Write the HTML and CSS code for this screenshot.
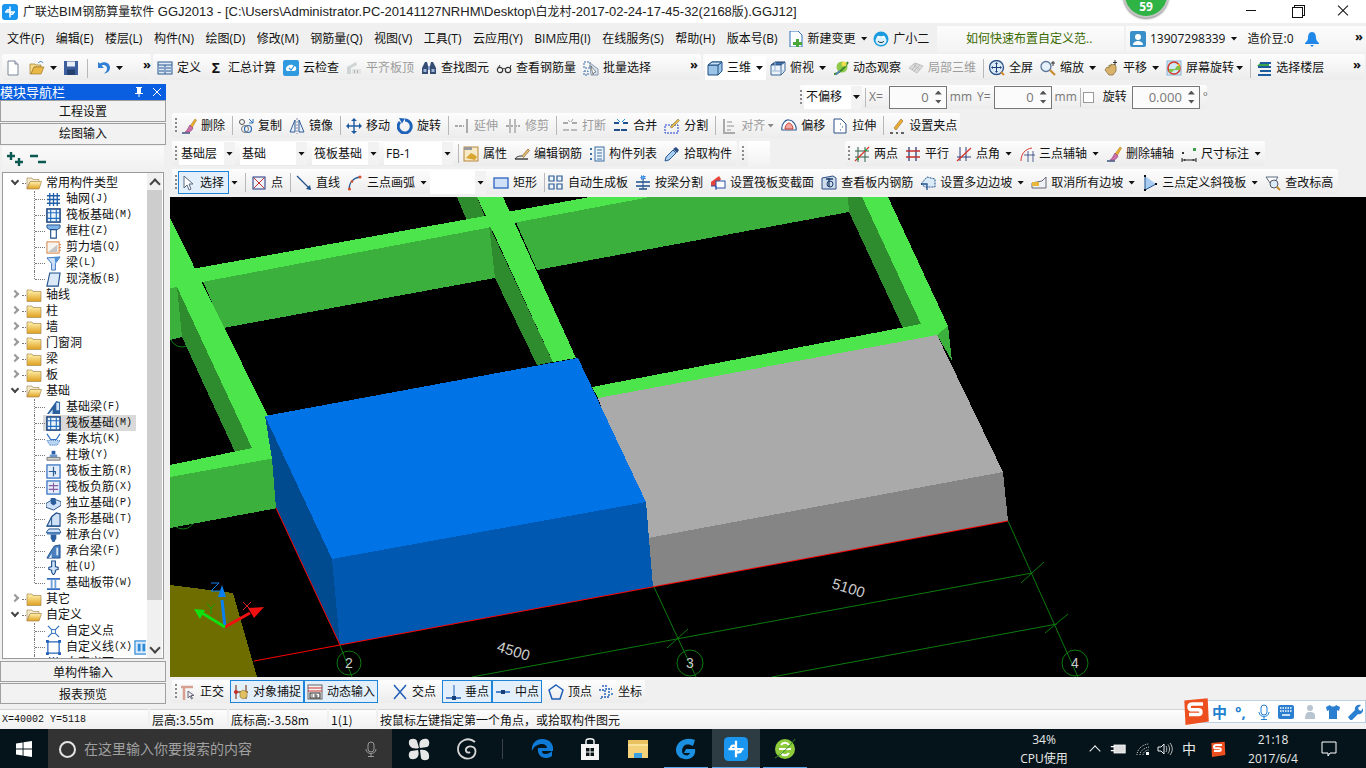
FILE: index.html
```html
<!DOCTYPE html>
<html lang="zh-CN">
<head>
<meta charset="utf-8">
<title>广联达BIM钢筋算量软件 GGJ2013</title>
<link rel="stylesheet" href="styles.css">
</head>
<body>
<svg class="defs" xmlns="http://www.w3.org/2000/svg">
<defs>
<linearGradient id="fy" x1="0" y1="0" x2="0" y2="1"><stop offset="0" stop-color="#fff2b0"/><stop offset="1" stop-color="#e0a020"/></linearGradient>
<symbol id="fclosed" viewBox="0 0 16 16"><path d="M1 3h5l1 1.500h8v10H1z" fill="url(#fy)" stroke="#a88a50" stroke-width=".7"/></symbol>
<symbol id="fopen" viewBox="0 0 16 16"><path d="M1 3h5l1 1.500h6v2.500H4L1 14z" fill="#f5ecd0" stroke="#a88a50" stroke-width=".7"/><path d="M1 14l3-7.500h11.500L13 14z" fill="url(#fy)" stroke="#a88a50" stroke-width=".7"/></symbol>
<symbol id="new" viewBox="0 0 16 16"><path d="M3 1h7l3 3v11H3z" fill="#fff" stroke="#7b8798"/><path d="M10 1v3h3" fill="#dde" stroke="#7b8798"/></symbol>
<symbol id="open" viewBox="0 0 16 16"><path d="M1 4h5l1 1h5v2H5l-3 7H1z" fill="#f3d98a" stroke="#a07a2a" stroke-width=".7"/><path d="M2 14l3-7h10l-3 7z" fill="#e9b846" stroke="#a07a2a" stroke-width=".7"/><path d="M9 3c2-2 4-2 5 0" fill="none" stroke="#3a7bc8"/></symbol>
<symbol id="save" viewBox="0 0 16 16"><rect x="1" y="1" width="14" height="14" fill="#3d5f9e"/><rect x="4" y="1.500" width="8" height="5" fill="#e8eef8"/><rect x="4" y="9.500" width="8" height="5.500" fill="#24406f"/></symbol>
<symbol id="undo" viewBox="0 0 16 16"><path d="M3 2v6h6L6.500 5.500C9 4 12 5.500 12 8.500c0 2-1 3.500-3 5 4-.5 6-3 6-6C15 3 9.500 .5 5 3.500z" fill="#2f7fd6"/></symbol>
<symbol id="def" viewBox="0 0 16 16"><rect x="1" y="2" width="14" height="12" fill="#dfe9f6" stroke="#2b5a94"/><path d="M1 5h14M2 8h5M2 11h5M9 8h5M9 11h5M8 5v9" stroke="#2b5a94"/></symbol>
<symbol id="cloud" viewBox="0 0 16 16"><rect x="0" y="0" width="16" height="16" rx="2" fill="#2f9ae0"/><path d="M3 10c-1-4 5-7 8-4 3 0 3 5 0 5H4z" fill="#fff"/><path d="M6 8l2 2 3-4" stroke="#2f9ae0" fill="none" stroke-width="1.200"/></symbol>
<symbol id="flush" viewBox="0 0 16 16"><path d="M1 7l9-5 1 3-6 3v6H1z" fill="#cfd4d4"/><path d="M6 9h9v5H6z" fill="#e2e4e4"/><path d="M8 10h1v3H8zM11 10h1v3h-1z" fill="#b0b4b4"/></symbol>
<symbol id="find" viewBox="0 0 16 16"><path d="M2 6l2-4h2l1 4v8H1V8zM14 6l-2-4h-2L9 6v8h6V8z" fill="#344b73"/><path d="M7 6h2v4H7z" fill="#8aa2c9"/><path d="M2.500 9h3v3h-3zM10.500 9h3v3h-3z" fill="#9db5d9"/></symbol>
<symbol id="glass" viewBox="0 0 16 16"><circle cx="4" cy="10" r="2.700" fill="none" stroke="#333" stroke-width="1.200"/><circle cx="12" cy="10" r="2.700" fill="none" stroke="#333" stroke-width="1.200"/><path d="M6.500 9c1-.7 2-.7 3 0M2 8l2-3M14 8l1-3" stroke="#333" fill="none"/></symbol>
<symbol id="batch" viewBox="0 0 16 16"><path d="M1 2h6v6H1zM1 11h4v4H1z" fill="none" stroke="#3a6ea5" stroke-dasharray="2 1"/><path d="M7 3l8 6v6H8z" fill="#dbe4ef" stroke="#8899aa"/><path d="M8 6l5 6-2 .500-1 2z" fill="#fff" stroke="#444" stroke-width=".6"/></symbol>
<symbol id="cube" viewBox="0 0 16 16"><path d="M1 5l4-3h10v9l-4 4H1z" fill="#9cc4e8" stroke="#1f4f80"/><path d="M1 5h10v10M11 5l4-3" fill="none" stroke="#1f4f80"/><path d="M1 5l4-3h10l-4 3z" fill="#c8e0f5" stroke="#1f4f80"/></symbol>
<symbol id="cube2" viewBox="0 0 16 16"><path d="M1 5l4-3h10l-4 3z" fill="#3d6fa8" stroke="#1f3f70"/><path d="M1 5h10v10H1zM11 5l4-3v9l-4 4" fill="#eaf3fb" stroke="#3c6796"/><path d="M5 2v9H1M5 11h10" stroke="#9db7d0" fill="none"/></symbol>
<symbol id="orbit" viewBox="0 0 16 16"><circle cx="9" cy="7" r="5.500" fill="#8fc94a"/><path d="M1 14c4 0 11-6 14-12" stroke="#3a8a2a" stroke-width="2" fill="none"/><circle cx="11" cy="4" r="2.500" fill="#f0dd50"/><path d="M3 15c1-2 2-3 4-4" stroke="#5a7fc0" stroke-width="1.500" fill="none"/></symbol>
<symbol id="local" viewBox="0 0 16 16"><path d="M1 8l6-5 8 3-6 7z" fill="#dcdcdc" stroke="#c0c0c0"/><path d="M5 4l7 6M9 3l-5 7M12 5l-6 6" stroke="#bbb" fill="none"/></symbol>
<symbol id="full" viewBox="0 0 16 16"><circle cx="7.500" cy="7.500" r="7" fill="#dcebf8" stroke="#2c4f86" stroke-width="1.300"/><path d="M7.500 3v9M3 7.500h9" stroke="#1e3f75"/><path d="M7.500 2l1.500 2H6zM7.500 13L6 11h3zM2 7.500L4 6v3zM13 7.500L11 9V6z" fill="#1e3f75"/><path d="M12 12l3 3" stroke="#d08a2a" stroke-width="2"/></symbol>
<symbol id="zoom" viewBox="0 0 16 16"><circle cx="6" cy="6.500" r="5" fill="#e6f0fa" stroke="#5b7797" stroke-width="1.300"/><path d="M10 10l5 5" stroke="#c98c2c" stroke-width="2.200"/><path d="M13 1v5M11 3h4" stroke="#333"/></symbol>
<symbol id="pan" viewBox="0 0 16 16"><path d="M2 10l2-3 2 1V5l2 1V4l2 1 1-1 2 2v5l-3 4H6z" fill="#d9b36c" stroke="#7e6531" stroke-width=".7"/><path d="M12 0v5M10 2.500h4" stroke="#333"/></symbol>
<symbol id="rot3" viewBox="0 0 16 16"><rect x="1" y="1" width="14" height="14" fill="#cfe8f7" stroke="#88b5d6"/><circle cx="8" cy="8" r="6" fill="none" stroke="#d23a2a" stroke-width="1.600"/><path d="M3 9h6l2-3h3v4H8l-2 2H3z" fill="#7fc24a"/><path d="M11 4l3 0-1 3" fill="#f0b428"/></symbol>
<symbol id="floors" viewBox="0 0 16 16"><path d="M4 3h11M2 7h13M4 11h11M2 15h13" stroke="#1c5c9c" stroke-width="2"/><path d="M4 3L1 6h3zM2 7l3-3" fill="#3aa24a"/><path d="M4 5h9" stroke="#3aa24a" stroke-width="2"/></symbol>
<symbol id="del" viewBox="0 0 16 16"><path d="M1 15h8" stroke="#1d3f70" stroke-width="1.300"/><path d="M9 8l5-7 1.500 1L11 10z" fill="#f0b030" stroke="#9b6a14" stroke-width=".5"/><path d="M9 7l3 3c-1 3-4 5-8 4 2-1 3-4 5-7z" fill="#cc6fa8" stroke="#7b2e66" stroke-width=".5"/></symbol>
<symbol id="copy" viewBox="0 0 16 16"><circle cx="4" cy="4" r="2.500" fill="none" stroke="#555"/><circle cx="10" cy="11" r="3.500" fill="none" stroke="#2c6cb8" stroke-width="1.200"/><circle cx="7" cy="11" r="3.500" fill="none" stroke="#777"/><path d="M11 1l4 4M15 1v4h-4" stroke="#2c6cb8" fill="none"/></symbol>
<symbol id="mirror" viewBox="0 0 16 16"><path d="M1 14L6 2v12zM15 14L10 2v12z" fill="#e8f1fa" stroke="#2f5c94"/><path d="M8 0v16" stroke="#88a" stroke-dasharray="2 1"/></symbol>
<symbol id="move" viewBox="0 0 16 16"><path d="M8 1v14M1 8h14" stroke="#1f5aa0" stroke-width="1.400"/><path d="M8 0l3 3H5zM8 16l-3-3h6zM0 8l3-3v6zM16 8l-3 3V5z" fill="#1f5aa0"/></symbol>
<symbol id="rot" viewBox="0 0 16 16"><path d="M3 4a6.500 6.500 0 1 0 5-2" fill="none" stroke="#1f63b8" stroke-width="3"/><path d="M2 0l6 .500-3 5z" fill="#1f63b8"/></symbol>
<symbol id="ext" viewBox="0 0 16 16"><path d="M1 8h9" stroke="#aaa" stroke-dasharray="3 1" stroke-width="2"/><path d="M13 1v14" stroke="#aaa" stroke-width="2"/></symbol>
<symbol id="trim" viewBox="0 0 16 16"><path d="M1 8h14" stroke="#aaa" stroke-dasharray="3 1" stroke-width="2"/><path d="M5 1v14M10 1v14" stroke="#bbb" stroke-width="2"/></symbol>
<symbol id="brk" viewBox="0 0 16 16"><path d="M1 5h5M10 5h5" stroke="#aaa" stroke-width="2"/><path d="M1 12h14" stroke="#bbb" stroke-width="2" stroke-dasharray="6 2"/><path d="M6 2l2 2M11 1l-2 3" stroke="#aaa"/></symbol>
<symbol id="merge" viewBox="0 0 16 16"><path d="M1 12h14" stroke="#1f4f8c" stroke-width="2" stroke-dasharray="6 1"/><path d="M1 5h5M10 5h5" stroke="#1f4f8c" stroke-width="2"/><path d="M4 1l3 3M12 1L9 4" stroke="#1f8cd8"/></symbol>
<symbol id="split" viewBox="0 0 16 16"><rect x="1" y="7" width="13" height="8" fill="none" stroke="#1a3fd0" stroke-dasharray="2 1"/><path d="M6 9l8-8 1.500 1.500L8 10z" fill="#e9b84a" stroke="#664"  stroke-width=".5"/></symbol>
<symbol id="align" viewBox="0 0 16 16"><path d="M3 1v14h11" stroke="#aaa" stroke-width="2" fill="none"/><path d="M6 4h5M6 8h7M6 12h4" stroke="#c4c4c4" stroke-width="2"/></symbol>
<symbol id="offset" viewBox="0 0 16 16"><path d="M1 12c-1-5 3-11 7-10 4 0 8 6 7 10z" fill="#fff" stroke="#2c5c94" stroke-width="1.200"/><path d="M4 11c0-3 2-6 4-6s4 3 4 6z" fill="#f1a7a0" stroke="#c83c34"/></symbol>
<symbol id="stretch" viewBox="0 0 16 16"><path d="M2 1h7l5 5v9H2z" fill="#fff" stroke="#2c4f86"/><path d="M8 6h1M10 9h1M8 12h1" stroke="#2c4f86"/></symbol>
<symbol id="gripset" viewBox="0 0 16 16"><path d="M1 15h3M7 15h2M12 15h3" stroke="#333" stroke-width="1.500"/><path d="M5 10l7-9 2 2-7 9z" fill="#f0b030" stroke="#7b4a14" stroke-width=".5"/></symbol>
<symbol id="prop" viewBox="0 0 16 16"><rect x="1" y="1" width="14" height="14" fill="#f7e8c6" stroke="#b8893a"/><path d="M1 1h8v3H1z" fill="#999"/><path d="M3 12l5-5 4 2 2 2-2 3z" fill="#d8a530"/></symbol>
<symbol id="rebar" viewBox="0 0 16 16"><path d="M1 13h13" stroke="#222" stroke-width="1.300"/><path d="M1 13c2-3 5-3 7-3" stroke="#222" fill="none"/><path d="M8 10l6-7 1.500 1.500-6 7z" fill="#e9c27a" stroke="#704a14" stroke-width=".6"/></symbol>
<symbol id="list" viewBox="0 0 16 16"><path d="M1 2h2v2H1zM1 7h2v2H1zM1 12h2v2H1z" fill="#3a6ea5"/><rect x="6" y="1" width="9" height="14" fill="#eef4fa" stroke="#3a6ea5"/><path d="M8 4h5M8 7h5M8 10h5M8 13h5" stroke="#3a6ea5"/></symbol>
<symbol id="pick" viewBox="0 0 16 16"><path d="M1 15l1-4 7-7 3 3-7 7z" fill="#a8cdf0" stroke="#2c5c94"/><path d="M9 3l3-2 3 3-2 3z" fill="#2c4f86"/></symbol>
<symbol id="two" viewBox="0 0 16 16"><path d="M4 1v15M11 1v15M1 5h14M1 11h14" stroke="#2c5f45"/><path d="M1 15L15 1" stroke="#d8342a" stroke-width="1.300"/><path d="M3 12h2v2H3zM11 3h2v2h-2z" fill="#2aa84a"/></symbol>
<symbol id="par" viewBox="0 0 16 16"><path d="M4 1v14M11 1v14" stroke="#2c3f7a" stroke-width="1.300"/><path d="M1 5h14M1 11h14" stroke="#c83030" stroke-width="1.300"/></symbol>
<symbol id="ang" viewBox="0 0 16 16"><path d="M4 1v14M10 1v14M1 11h14" stroke="#2c3f7a"/><path d="M1 15L15 2" stroke="#d8342a" stroke-width="1.300"/></symbol>
<symbol id="arc3" viewBox="0 0 16 16"><path d="M2 15C2 8 6 3 13 2" fill="none" stroke="#d8342a"/><path d="M9 5v11M14 5v11M5 9h11" stroke="#2c3f7a" stroke-width=".8"/></symbol>
<symbol id="dim" viewBox="0 0 16 16"><path d="M1 12v4M15 12v4M1 14h14" stroke="#222"/><path d="M1 6h2v2H1z" fill="#333"/><path d="M12 2h3v3h-3z" fill="#3aa24a"/><path d="M5 14l-2-1v2zM11 14l2-1v2z" fill="#222"/></symbol>
<symbol id="cur" viewBox="0 0 16 16"><path d="M4 1v12l3-3 2 5 2-1-2-5h4z" fill="#fff" stroke="#5a6a80"/></symbol>
<symbol id="pt" viewBox="0 0 16 16"><rect x="2" y="2" width="12" height="12" fill="#eef2fb" stroke="#20307a"/><path d="M3 3l10 10M13 3L3 13" stroke="#c83030"/></symbol>
<symbol id="line" viewBox="0 0 16 16"><path d="M1 1l13 13" stroke="#1f4f8c" stroke-width="1.300"/><path d="M15 15l-5-1 4-4z" fill="#1f4f8c"/></symbol>
<symbol id="arc" viewBox="0 0 16 16"><path d="M2 15C2 8 6 3 13 2" fill="none" stroke="#2c5c94" stroke-width="1.300"/><circle cx="2.500" cy="14" r="1.500" fill="#d8502a"/><circle cx="5" cy="6.500" r="1.300" fill="#d8502a"/><circle cx="13" cy="2" r="1.500" fill="#d8502a"/></symbol>
<symbol id="rect" viewBox="0 0 16 16"><rect x="1" y="3" width="14" height="10" fill="#cfe0f7" stroke="#2d62c0" stroke-width="1.300"/></symbol>
<symbol id="auto" viewBox="0 0 16 16"><path d="M1 1h5v5H1zM9 1h5v5H9zM1 9h5v5H1zM9 9h5v5H9z" fill="#eef4fb" stroke="#2b5a94" stroke-width="1.200"/></symbol>
<symbol id="bsplit" viewBox="0 0 16 16"><path d="M6 1h4v3H6z" fill="#5ab0e8" stroke="#1a5ad0" stroke-dasharray="1 1"/><path d="M1 7h14M1 11h14M4 14h8" stroke="#1f4f8c" stroke-width="1.500"/><path d="M8 4v10" stroke="#1f4f8c"/></symbol>
<symbol id="var" viewBox="0 0 16 16"><path d="M1 7l8-6 2 3-5 7H1z" fill="#e8443a"/><rect x="6" y="6" width="9" height="7" fill="#fff" stroke="#2c4fa8"/><path d="M1 11h5v4" fill="none" stroke="#2c4fa8"/></symbol>
<symbol id="view" viewBox="0 0 16 16"><path d="M1 3l11-2 3 2v11H1z" fill="#cfdceb" stroke="#2c4f86"/><path d="M5 4h7M8 3v9" stroke="#1c3c6c" stroke-width="1.300"/><circle cx="9" cy="9" r="3" fill="none" stroke="#1c3c6c"/></symbol>
<symbol id="poly" viewBox="0 0 16 16"><path d="M1 9l6-7 8 2v8H5z" fill="#dcebf8" stroke="#1f4f8c" stroke-dasharray="2 1"/><path d="M1 9h6v6" fill="none" stroke="#1f4f8c" stroke-width="1.300"/></symbol>
<symbol id="cancel" viewBox="0 0 16 16"><path d="M1 8l10-2 4-4v11H1z" fill="#eef2f7" stroke="#667"/><path d="M1 7h7v4H1z" fill="#e8b838"/></symbol>
<symbol id="tri" viewBox="0 0 16 16"><path d="M3 1v14l11-6z" fill="#a8cdf0"/><path d="M3 1v14l11-6" fill="none" stroke="#1f4f8c"/><path d="M2 0h2v2H2zM2 14h2v2H2zM13 8h2v2h-2z" fill="#111"/></symbol>
<symbol id="elev" viewBox="0 0 16 16"><path d="M1 2h12L9 8H5z" fill="#fff" stroke="#5b6b80"/><circle cx="9" cy="9" r="4" fill="#dcebf8" stroke="#556"/><path d="M12 12l3 3" stroke="#c98c2c" stroke-width="2"/></symbol>
<symbol id="tgrid" viewBox="0 0 16 16"><path d="M4 1v14M8 1v14M12 1v14M1 4h14M1 8h14M1 12h14" stroke="#1f5fa8" stroke-width="1.400"/></symbol>
<symbol id="traft" viewBox="0 0 16 16"><rect x="1" y="1" width="14" height="14" fill="#eaf2fb" stroke="#173f7a" stroke-width="1.600"/><path d="M5 1v14M11 1v14M1 5h14M1 11h14" stroke="#1f6fc0" stroke-width="1.200"/></symbol>
<symbol id="tcol" viewBox="0 0 16 16"><path d="M1 1h14v3l-3 2H4L1 4z" fill="#7fb4e8" stroke="#1f4f8c"/><path d="M5 6h6v9H5z" fill="#fff" stroke="#1f4f8c" stroke-width="1.200"/></symbol>
<symbol id="twall" viewBox="0 0 16 16"><rect x="1" y="2" width="13" height="12" fill="#f7f3ee" stroke="#d87c3a"/><path d="M2 13l10-8v8z" fill="#c4c4c4"/><path d="M14 5h2M14 8h2M14 11h2" stroke="#d87c3a"/></symbol>
<symbol id="tbeam" viewBox="0 0 16 16"><path d="M1 2l14-1-5 7v7H6V8z" fill="#cfe2f7" stroke="#2f6ec0"/><path d="M9 1l5 0-4 7z" fill="#4a90d8"/></symbol>
<symbol id="tslab" viewBox="0 0 16 16"><path d="M4 1h11l-2 14H1z" fill="#dbe9f8" stroke="#1f4f8c" stroke-width="1.200"/></symbol>
<symbol id="tsb" viewBox="0 0 16 16"><path d="M1 15l5-7 5-7 4 1v13H1z" fill="#2c5f9e"/><path d="M3 15l4-5v5zM11 3h3v8h-3z" fill="#cfe2f7"/></symbol>
<symbol id="tpit" viewBox="0 0 16 16"><path d="M1 2l4 6h6l4-6" fill="none" stroke="#2f6ec0" stroke-width="1.300"/><path d="M1 9l3 5h8l3-5z" fill="#b8d4f0" stroke="#2f6ec0" stroke-dasharray="1 1"/></symbol>
<symbol id="tcap" viewBox="0 0 16 16"><path d="M6 3h4v4H6z" fill="#2c5fa8"/><path d="M4 7h8v3H4z" fill="#6a98d0"/><path d="M1 10h14v3H1z" fill="#d0d0d0" stroke="#777"/></symbol>
<symbol id="trm" viewBox="0 0 16 16"><rect x="1" y="1" width="14" height="14" fill="#e3eefa" stroke="#2f6ec0" stroke-width="1.300"/><path d="M8 3v10M3 8h7v3" fill="none" stroke="#2f5c94" stroke-width="1.300"/></symbol>
<symbol id="trn" viewBox="0 0 16 16"><rect x="1" y="1" width="14" height="14" fill="#e3eefa" stroke="#2f6ec0" stroke-width="1.300"/><path d="M8 3v10M3 6h10M3 10h10" stroke="#8a5aa0" stroke-width="1.100"/></symbol>
<symbol id="tiso" viewBox="0 0 16 16"><path d="M0 8l8-5 8 3v4l-8 5-8-3z" fill="#cfe2f7" stroke="#1f4f8c"/><path d="M5 2h5l1 6-3 2-3-2z" fill="#2c5f9e"/></symbol>
<symbol id="tstrip" viewBox="0 0 16 16"><path d="M1 15l3-6 2-4 5-4 4 1v13H1z" fill="#cfe2f7" stroke="#1f4f8c" stroke-width="1.200"/><path d="M1 15h14M6 5v10" stroke="#1f4f8c"/></symbol>
<symbol id="tpc" viewBox="0 0 16 16"><path d="M3 1h11l2 4H0z" fill="#cfe2f7" stroke="#1f4f8c"/><path d="M1 5h14v2H1z" fill="#4a80c0"/><path d="M5 7h6v4l-2 4H7l-2-4z" fill="#2c5f9e"/></symbol>
<symbol id="tcb" viewBox="0 0 16 16"><path d="M1 15l4-7 4-6 6-1v14z" fill="#4a80c0" stroke="#1f4f8c"/><path d="M3 15l3-5v5z M11 4h2v8h-2z" fill="#dbe9f8"/></symbol>
<symbol id="tpile" viewBox="0 0 16 16"><path d="M6 1h4v6l3 1v2l-3 1v2l-2 3-2-3v-2l-3-1V8l3-1z" fill="#cfe2f7" stroke="#1f4f8c" stroke-width="1.200"/></symbol>
<symbol id="tband" viewBox="0 0 16 16"><path d="M1 2h14v2H1zM1 13h14v2H1z" fill="#2f6ec0"/><path d="M5 4h2v9H5zM9 4h2v9H9z" fill="#6fa0d8"/></symbol>
<symbol id="tcpt" viewBox="0 0 16 16"><path d="M2 2l12 12M14 2L2 14" stroke="#2f6ec0" stroke-width="1.300"/><rect x="6" y="6" width="4" height="4" fill="#fff" stroke="#2f6ec0"/></symbol>
<symbol id="tcln" viewBox="0 0 16 16"><rect x="2" y="2" width="12" height="12" fill="none" stroke="#1f5fb8" stroke-width="1.300"/><path d="M0 0h3v3H0zM13 0h3v3h-3zM0 13h3v3H0zM13 13h3v3h-3z" fill="#1f5fb8"/></symbol>
<symbol id="tls" viewBox="0 0 16 16"><rect x="1" y="1" width="14" height="14" fill="#d9ebfb" stroke="#2f8ad8" stroke-width="1.300"/><path d="M4 4h3v8H4zM9 4h3v8H9z" fill="#2f8ad8"/></symbol>
<symbol id="ortho" viewBox="0 0 16 16"><path d="M1 3h12M4 3v13" stroke="#d8a090" stroke-width="2.500"/><path d="M8 7v7l2-2 1.500 3 1-.5-1.500-3h3z" fill="#eee" stroke="#667"/></symbol>
<symbol id="osnap" viewBox="0 0 16 16"><path d="M3 1v14M13 1v14M1 8h14" stroke="#8a5030" stroke-width="1.300"/><circle cx="3" cy="8" r="2" fill="#c83030"/><path d="M7 8l3-2 4 2v5l-4 2-3-2z" fill="#e0c060" stroke="#8a7030" stroke-width=".6"/></symbol>
<symbol id="dyn" viewBox="0 0 16 16"><rect x="1" y="1" width="14" height="14" fill="#f4f4f4" stroke="#666"/><path d="M1 4h14M1 7h14" stroke="#c83030"/><rect x="3" y="9" width="10" height="5" fill="#fff" stroke="#222"/><path d="M5 10v3M8 10v3h2v-2H8" stroke="#222" stroke-width=".7" fill="none"/></symbol>
<symbol id="cross" viewBox="0 0 16 16"><path d="M2 1l12 14M14 1L2 15" stroke="#1f5fb8" stroke-width="1.500"/></symbol>
<symbol id="perp" viewBox="0 0 16 16"><path d="M1 14h15" stroke="#1f5fb8" stroke-width="1.500"/><path d="M9 1v13" stroke="#1f5fb8"/><rect x="7" y="12" width="4" height="4" fill="#173f7a"/></symbol>
<symbol id="midp" viewBox="0 0 16 16"><path d="M1 8h14" stroke="#1f5fb8" stroke-width="1.500"/><rect x="6" y="6" width="4" height="4" fill="#173f7a"/></symbol>
<symbol id="vert" viewBox="0 0 16 16"><path d="M8 1l7 5-3 9H4L1 6z" fill="none" stroke="#1f5fb8" stroke-width="1.500"/></symbol>
<symbol id="coord" viewBox="0 0 16 16"><path d="M5 1v3M1 6h6v5M8 1v4h6M11 7v6H3v2M14 9v3" fill="none" stroke="#1f5fb8" stroke-dasharray="2 1" stroke-width="1.400"/></symbol>
<symbol id="app" viewBox="0 0 16 16"><rect width="16" height="16" rx="3" fill="#1a96f0"/><path d="M8 2.500v11M3 8h10M4.500 8c0-3 3.500-3 3.500 0M8 8c0 3 3.500 3 3.500 0" fill="none" stroke="#fff" stroke-width="1.500"/></symbol>
<symbol id="win" viewBox="0 0 16 16"><path d="M0 2.400l6.600-1v6.200H0zM7.500 1.300L16 0v7.600H7.500zM0 8.400h6.600v6.200l-6.600-1zM7.500 8.400H16V16l-8.500-1.300z" fill="#fff"/></symbol>
<symbol id="mic" viewBox="0 0 16 16"><rect x="5" y="1" width="6" height="10" rx="3" fill="none" stroke="currentColor"/><path d="M3 8c0 6 10 6 10 0M8 13v2M5 15.500h6" fill="none" stroke="currentColor"/></symbol>
<symbol id="wheel" viewBox="0 0 24 24"><path d="M12 11C5 13 1 9 2 4c1-3 7-3 8 0zM13 11C11 5 14 1 20 2c3 1 3 7 0 8zM13 13c6-1 10 2 9 8-1 3-7 3-8 0zM11 13c2 6-1 10-7 9-3-1-3-7 0-8z" fill="#e6e6e6"/></symbol>
<symbol id="swirl" viewBox="0 0 24 24"><path d="M20 5C13-1 3 4 3 12c0 7 7 11 13 9 5-2 6-9 2-11-4-2-8 1-7 4 1 2 3 2 4 1" fill="none" stroke="#d6d6d6" stroke-width="1.800"/></symbol>
<symbol id="edge" viewBox="0 0 24 24"><path d="M12 2C5 2 1 8 2 14c2-5 6-7 10-7 3 0 5 2 5 4H8c-1 6 3 10 8 10 2 0 4-.500 6-2v-5c-2 2-4 3-7 3-2 0-3-1-3-3h11c1-7-3-12-11-12z" fill="#0e7ad6"/></symbol>
<symbol id="store" viewBox="0 0 24 24"><path d="M3 7h18v16H3z" fill="#f4f4f4"/><path d="M8 8V4c0-3 8-3 8 0v4" fill="none" stroke="#f4f4f4" stroke-width="1.500"/><path d="M8 11h3.500v3.500H8zM12.500 11H16v3.500h-3.500zM8 15.500h3.500V19H8zM12.500 15.500H16V19h-3.500z" fill="#0a1418"/></symbol>
<symbol id="fold" viewBox="0 0 24 24"><path d="M2 3h20v18H2z" fill="#f3d27a"/><path d="M2 3h20v4H2z" fill="#e9c160"/><path d="M8 21v-5h8v5" fill="#3aa0e0"/><path d="M2 8h20" stroke="#fff2c0"/></symbol>
<symbol id="g" viewBox="0 0 24 24"><path d="M21 3C11-1 2 5 2 13c0 7 7 10 12 9 5-1 8-5 7-10h-9l-2 4h6c-1 2-3 3-5 2-4-1-4-7 0-10 3-1 6 0 8 1z" fill="#1b8fe0"/></symbol>
<symbol id="ie" viewBox="0 0 24 24"><circle cx="12" cy="12" r="10" fill="#8ecb3a"/><path d="M6 12h12M8 16c2 3 6 3 8 0M8 8c2-3 6-3 8 0" stroke="#fff" stroke-width="2" fill="none"/><path d="M2 21C8 18 18 8 22 2" stroke="#2f8a2a" fill="none"/></symbol>
<symbol id="batt" viewBox="0 0 20 16"><rect x="5" y="3" width="14" height="10" fill="#ddd" stroke="#fff"/><path d="M1 5h4M1 10h4" stroke="#fff" stroke-width="1.500"/></symbol>
<symbol id="wifi" viewBox="0 0 16 16"><path d="M2 14C2 8 8 3 14 3M5 14c0-4 4-7 9-8M8 14c0-2 2-5 6-5" fill="none" stroke="#cfcfcf" stroke-dasharray="1 1"/><rect x="11" y="11" width="3" height="3" fill="#fff"/></symbol>
<symbol id="spk" viewBox="0 0 16 16"><path d="M1 6h3l3-3v10l-3-3H1z" fill="none" stroke="#eee"/><path d="M9 5c1 2 1 4 0 6M11 3.500c2 3 2 6 0 9M13 2c3 4 3 8 0 12" fill="none" stroke="#bbb"/></symbol>
<symbol id="note" viewBox="0 0 16 16"><path d="M1 1h14v11H9l-2 3v-3H1z" fill="none" stroke="#fff"/></symbol>
<symbol id="sglogo" viewBox="0 0 24 24"><path d="M2 3l20-2 1 20-20 3z" fill="#ee4f1f"/><path d="M18 6H9C5 6 5 11 9 11h5c3 0 3 4 0 4H6" fill="none" stroke="#fff" stroke-width="3"/></symbol>
<symbol id="kbd" viewBox="0 0 16 16"><rect x="0" y="1" width="16" height="14" rx="2" fill="#2a7fd0"/><path d="M2 4h12M2 7h12" stroke="#fff" stroke-dasharray="1.500 1" stroke-width="1.500"/><path d="M4 11h8" stroke="#fff" stroke-width="1.500"/></symbol>
<symbol id="user" viewBox="0 0 16 16"><circle cx="7" cy="4" r="3" fill="#b8c4d0"/><path d="M2 15c0-7 3-7 5-7s4 0 5 3v4z" fill="#b8c4d0"/></symbol>
<symbol id="shirt" viewBox="0 0 16 16"><path d="M5 1L1 3l1 4 2-1v9h8V6l2 1 1-4-4-2c-1 2-5 2-6 0z" fill="#2a7fd0"/></symbol>
<symbol id="wrench" viewBox="0 0 16 16"><path d="M1 13l7-7c-1-3 2-6 6-5l-3 3 1 2 2 1 2-3c1 4-2 7-5 6l-7 7z" fill="#2a7fd0"/></symbol>
<symbol id="person" viewBox="0 0 16 16"><rect width="16" height="16" rx="2" fill="#3a8fc8"/><circle cx="8" cy="6" r="3" fill="#fff"/><path d="M3 14c0-3 3-4 5-4s5 1 5 4z" fill="#fff"/></symbol>
<symbol id="bell" viewBox="0 0 16 16"><path d="M8 1c3 0 4 3 4 6 0 2 1 3 3 5v1H1v-1c2-2 3-3 3-5 0-3 1-6 4-6z" fill="#2088e8"/><path d="M6 14h4l-2 2z" fill="#2088e8"/></symbol>
<symbol id="change" viewBox="0 0 16 16"><path d="M2 0h8l4 4v12H2z" fill="#fff" stroke="#2f6fb8"/><path d="M8 8h3v3h3v3h-3v2H8v-2H5v-3h3z" fill="#4aa83a"/></symbol>
<symbol id="xiao" viewBox="0 0 16 16"><circle cx="8" cy="8" r="7.500" fill="#1a9be0"/><ellipse cx="8" cy="9.500" rx="5.500" ry="4.500" fill="#d8f2ff"/><circle cx="5.500" cy="6" r="1.300" fill="#fff"/><circle cx="10.500" cy="6" r="1.300" fill="#fff"/><path d="M5 10c1 2 5 2 6 0" stroke="#123" fill="none"/></symbol>
<symbol id="pin" viewBox="0 0 12 12"><path d="M3 1h6v1H8v5h2v1H6.500v3h-1V8H2V7h2V2H3z" fill="#fff"/></symbol>
<symbol id="closex" viewBox="0 0 12 12"><path d="M2 2l8 8M10 2l-8 8" stroke="#fff"/></symbol>
<symbol id="plus" viewBox="0 0 18 14"><path d="M1 4h8M5 0v8" stroke="#0a5a52" stroke-width="2.400"/><path d="M9 10h8M13 6v8" stroke="#0a5a52" stroke-width="2.400"/></symbol>
<symbol id="minus" viewBox="0 0 18 14"><path d="M1 4h8M9 10h8" stroke="#0a5a52" stroke-width="2.400"/></symbol>
</defs>
</svg>

<header class="title">
  <svg class="ic"><use href="#app"/></svg>
  <span class="title-text"><span class="han">广联达</span>BIM<span class="han">钢筋算量软件</span> GGJ2013 - [C:\Users\Administrator.PC-20141127NRHM\Desktop\<span class="han">白龙村</span>-2017-02-24-17-45-32(2168<span class="han">版</span>).GGJ12]</span>
  <span class="badge"><b>59</b></span>
  <span class="win-btns">
    <i class="wmin"></i><i class="wmax"></i><i class="wclose"></i>
  </span>
</header>

<nav class="menu">
  <div class="menu-items">
    <span>文件(F)</span><span>编辑(E)</span><span>楼层(L)</span><span>构件(N)</span><span>绘图(D)</span><span>修改(M)</span><span>钢筋量(Q)</span><span>视图(V)</span><span>工具(T)</span><span>云应用(Y)</span><span>BIM应用(I)</span><span>在线服务(S)</span><span>帮助(H)</span><span>版本号(B)</span>
    <span class="ti m-new"><svg class="ic"><use href="#change"/></svg>新建变更<i class="arr"></i></span>
    <span class="ti m-xiao"><svg class="ic"><use href="#xiao"/></svg>广小二</span>
  </div>
  <div class="tip">如何快速布置自定义范..</div>
  <div class="account">
    <span class="ti"><svg class="ic"><use href="#person"/></svg>13907298339<i class="arr"></i></span>
    <span>造价豆:0</span>
    <svg class="ic"><use href="#bell"/></svg>
    <b class="more">»</b>
  </div>
</nav>

<div class="row1">
  <div class="bar g1">
    <svg class="ic"><use href="#new"/></svg>
    <svg class="ic"><use href="#open"/></svg><i class="arr"></i>
    <svg class="ic"><use href="#save"/></svg><i class="sep"></i>
    <svg class="ic"><use href="#undo"/></svg><i class="arr"></i>
    <b class="more">»</b>
  </div>
  <div class="bar g2">
    <span class="ti"><svg class="ic"><use href="#def"/></svg>定义</span>
    <span class="ti"><b class="sigma">Σ</b>汇总计算</span>
    <span class="ti"><svg class="ic"><use href="#cloud"/></svg>云检查</span>
    <span class="ti off"><svg class="ic"><use href="#flush"/></svg>平齐板顶</span>
    <span class="ti"><svg class="ic"><use href="#find"/></svg>查找图元</span>
    <span class="ti"><svg class="ic"><use href="#glass"/></svg>查看钢筋量</span>
    <span class="ti"><svg class="ic"><use href="#batch"/></svg>批量选择</span>
    <b class="more">»</b>
  </div>
  <div class="bar g3">
    <span class="ti whitebox"><svg class="ic"><use href="#cube"/></svg>三维<i class="arr"></i></span>
    <span class="ti"><svg class="ic"><use href="#cube2"/></svg>俯视<i class="arr"></i></span>
    <span class="ti"><svg class="ic"><use href="#orbit"/></svg>动态观察</span>
    <span class="ti off"><svg class="ic"><use href="#local"/></svg>局部三维</span><i class="sep"></i>
    <span class="ti"><svg class="ic"><use href="#full"/></svg>全屏</span>
    <span class="ti"><svg class="ic"><use href="#zoom"/></svg>缩放<i class="arr"></i></span>
    <span class="ti"><svg class="ic"><use href="#pan"/></svg>平移<i class="arr"></i></span>
    <span class="ti"><svg class="ic"><use href="#rot3"/></svg>屏幕旋转<i class="arr tight"></i></span><i class="sep"></i>
    <span class="ti"><svg class="ic"><use href="#floors"/></svg>选择楼层</span>
    <b class="more">»</b>
  </div>
</div>

<div class="work">
  <aside class="panel">
    <div class="panel-head"><span>模块导航栏</span><svg class="sm"><use href="#pin"/></svg><svg class="sm"><use href="#closex"/></svg></div>
    <div class="pbtn first">工程设置</div>
    <div class="pbtn">绘图输入</div>
    <div class="pbody">
      <div class="ptools"><svg class="pm"><use href="#plus"/></svg><svg class="pm"><use href="#minus"/></svg></div>
      <div class="tree">
        <ul class="tlist">
          <li class="fo"><i class="chev open"></i><svg class="ic"><use href="#fopen"/></svg>常用构件类型</li>
          <li class="leaf"><svg class="ic"><use href="#tgrid"/></svg>轴网<em>(J)</em></li>
          <li class="leaf"><svg class="ic"><use href="#traft"/></svg>筏板基础<em>(M)</em></li>
          <li class="leaf"><svg class="ic"><use href="#tcol"/></svg>框柱<em>(Z)</em></li>
          <li class="leaf"><svg class="ic"><use href="#twall"/></svg>剪力墙<em>(Q)</em></li>
          <li class="leaf"><svg class="ic"><use href="#tbeam"/></svg>梁<em>(L)</em></li>
          <li class="leaf end"><svg class="ic"><use href="#tslab"/></svg>现浇板<em>(B)</em></li>
          <li class="fo"><i class="chev"></i><svg class="ic"><use href="#fclosed"/></svg>轴线</li>
          <li class="fo"><i class="chev"></i><svg class="ic"><use href="#fclosed"/></svg>柱</li>
          <li class="fo"><i class="chev"></i><svg class="ic"><use href="#fclosed"/></svg>墙</li>
          <li class="fo"><i class="chev"></i><svg class="ic"><use href="#fclosed"/></svg>门窗洞</li>
          <li class="fo"><i class="chev"></i><svg class="ic"><use href="#fclosed"/></svg>梁</li>
          <li class="fo"><i class="chev"></i><svg class="ic"><use href="#fclosed"/></svg>板</li>
          <li class="fo"><i class="chev open"></i><svg class="ic"><use href="#fopen"/></svg>基础</li>
          <li class="leaf"><svg class="ic"><use href="#tsb"/></svg>基础梁<em>(F)</em></li>
          <li class="leaf hl"><svg class="ic"><use href="#traft"/></svg>筏板基础<em>(M)</em></li>
          <li class="leaf"><svg class="ic"><use href="#tpit"/></svg>集水坑<em>(K)</em></li>
          <li class="leaf"><svg class="ic"><use href="#tcap"/></svg>柱墩<em>(Y)</em></li>
          <li class="leaf"><svg class="ic"><use href="#trm"/></svg>筏板主筋<em>(R)</em></li>
          <li class="leaf"><svg class="ic"><use href="#trn"/></svg>筏板负筋<em>(X)</em></li>
          <li class="leaf"><svg class="ic"><use href="#tiso"/></svg>独立基础<em>(P)</em></li>
          <li class="leaf"><svg class="ic"><use href="#tstrip"/></svg>条形基础<em>(T)</em></li>
          <li class="leaf"><svg class="ic"><use href="#tpc"/></svg>桩承台<em>(V)</em></li>
          <li class="leaf"><svg class="ic"><use href="#tcb"/></svg>承台梁<em>(F)</em></li>
          <li class="leaf"><svg class="ic"><use href="#tpile"/></svg>桩<em>(U)</em></li>
          <li class="leaf end"><svg class="ic"><use href="#tband"/></svg>基础板带<em>(W)</em></li>
          <li class="fo"><i class="chev"></i><svg class="ic"><use href="#fclosed"/></svg>其它</li>
          <li class="fo"><i class="chev open"></i><svg class="ic"><use href="#fopen"/></svg>自定义</li>
          <li class="leaf"><svg class="ic"><use href="#tcpt"/></svg>自定义点</li>
          <li class="leaf"><svg class="ic"><use href="#tcln"/></svg>自定义线<em>(X)</em><svg class="ic tail"><use href="#tls"/></svg></li>
          <li class="leaf"><svg class="ic"><use href="#tgrid"/></svg>自定义面</li>
        </ul>
        <div class="scroll">
          <i class="sup"></i>
          <i class="thumb"></i>
          <i class="strack"></i>
          <i class="sdown"></i>
        </div>
      </div>
    </div>
    <div class="pbtn low">单构件输入</div>
    <div class="pbtn low">报表预览</div>
  </aside>

  <main class="right">
    <div class="r2">
      <div class="bar gop">
        <i class="grip"></i>
        <span class="combo c-off">不偏移<i class="carr"><i class="arr"></i></i></span><i class="sep"></i>
        <span class="lbl">X=</span>
        <span class="num w58 nx">0<i class="spin"></i></span>
        <span class="lbl">mm</span><span class="lbl y">Y=</span>
        <span class="num w58">0<i class="spin"></i></span>
        <span class="lbl">mm</span><i class="sep"></i>
        <i class="check"></i>
        <span class="rotl">旋转</span>
        <span class="num w68">0.000<i class="spin"></i></span>
        <span class="lbl">°</span>
      </div>
    </div>
    <div class="r3">
      <div class="bar gedit">
        <i class="grip"></i>
        <span class="ti"><svg class="ic"><use href="#del"/></svg>删除</span><i class="sep"></i>
        <span class="ti"><svg class="ic"><use href="#copy"/></svg>复制</span>
        <span class="ti"><svg class="ic"><use href="#mirror"/></svg>镜像</span><i class="sep"></i>
        <span class="ti"><svg class="ic"><use href="#move"/></svg>移动</span>
        <span class="ti"><svg class="ic"><use href="#rot"/></svg>旋转</span><i class="sep"></i>
        <span class="ti off"><svg class="ic"><use href="#ext"/></svg>延伸</span>
        <span class="ti off"><svg class="ic"><use href="#trim"/></svg>修剪</span><i class="sep"></i>
        <span class="ti off"><svg class="ic"><use href="#brk"/></svg>打断</span>
        <span class="ti"><svg class="ic"><use href="#merge"/></svg>合并</span>
        <span class="ti"><svg class="ic"><use href="#split"/></svg>分割</span><i class="sep"></i>
        <span class="ti off"><svg class="ic"><use href="#align"/></svg>对齐<i class="arr tight gray"></i></span>
        <span class="ti"><svg class="ic"><use href="#offset"/></svg>偏移</span>
        <span class="ti"><svg class="ic"><use href="#stretch"/></svg>拉伸</span><i class="sep"></i>
        <span class="ti"><svg class="ic"><use href="#gripset"/></svg>设置夹点</span>
      </div>
    </div>
    <div class="r4">
      <div class="bar gcomp">
        <i class="grip"></i>
        <span class="combo w56">基础层<i class="carr"><i class="arr"></i></i></span>
        <span class="combo w67">基础<i class="carr"><i class="arr"></i></i></span>
        <span class="combo w67">筏板基础<i class="carr"><i class="arr"></i></i></span>
        <span class="combo w70">FB-1<i class="carr"><i class="arr"></i></i></span><i class="sep"></i>
        <span class="ti"><svg class="ic"><use href="#prop"/></svg>属性</span>
        <span class="ti"><svg class="ic"><use href="#rebar"/></svg>编辑钢筋</span>
        <span class="ti"><svg class="ic"><use href="#list"/></svg>构件列表</span>
        <span class="ti"><svg class="ic"><use href="#pick"/></svg>拾取构件</span>
      </div>
      <div class="bar gblank"><i class="grip"></i><i class="blank"></i></div>
      <div class="bar gaux">
        <i class="grip"></i>
        <span class="ti"><svg class="ic"><use href="#two"/></svg>两点</span>
        <span class="ti"><svg class="ic"><use href="#par"/></svg>平行</span>
        <span class="ti"><svg class="ic"><use href="#ang"/></svg>点角<i class="arr"></i></span>
        <span class="ti"><svg class="ic"><use href="#arc3"/></svg>三点辅轴<i class="arr"></i></span>
        <span class="ti"><svg class="ic"><use href="#del"/></svg>删除辅轴</span>
        <span class="ti"><svg class="ic"><use href="#dim"/></svg>尺寸标注<i class="arr"></i></span>
      </div>
    </div>
    <div class="r5">
      <div class="bar gdraw">
        <i class="grip"></i>
        <span class="ti hot sel-btn"><svg class="ic"><use href="#cur"/></svg>选择</span><i class="arr"></i><i class="sep"></i>
        <span class="ti"><svg class="ic"><use href="#pt"/></svg>点</span><i class="sep"></i>
        <span class="ti"><svg class="ic"><use href="#line"/></svg>直线</span>
        <span class="ti"><svg class="ic"><use href="#arc"/></svg>三点画弧<i class="arr"></i></span>
        <span class="combo w56 blankcombo"><i class="carr"><i class="arr"></i></i></span>
        <span class="ti"><svg class="ic"><use href="#rect"/></svg>矩形</span><i class="sep s4"></i>
        <span class="ti"><svg class="ic"><use href="#auto"/></svg>自动生成板</span>
        <span class="ti"><svg class="ic"><use href="#bsplit"/></svg>按梁分割</span>
        <span class="ti"><svg class="ic"><use href="#var"/></svg>设置筏板变截面</span>
        <span class="ti"><svg class="ic"><use href="#view"/></svg>查看板内钢筋</span>
        <span class="ti"><svg class="ic"><use href="#poly"/></svg>设置多边边坡<i class="arr"></i></span>
        <span class="ti"><svg class="ic"><use href="#cancel"/></svg>取消所有边坡<i class="arr"></i></span>
        <span class="ti"><svg class="ic"><use href="#tri"/></svg>三点定义斜筏板<i class="arr"></i></span>
        <span class="ti"><svg class="ic"><use href="#elev"/></svg>查改标高</span>
      </div>
    </div>

    <svg class="canvas" viewBox="170 197 1196 480" xmlns="http://www.w3.org/2000/svg" shape-rendering="crispEdges">
      <rect x="170" y="197" width="1196" height="480" fill="#000"/>
      <polygon class="olive" points="170,585 233,593 257,677 170,677"/>
      <g class="gl" shape-rendering="auto">
        <circle cx="182" cy="335" r="12"/><circle cx="183" cy="517" r="12"/>
        <circle cx="349" cy="663" r="12"/><circle cx="690" cy="663" r="13"/><circle cx="1075" cy="663" r="13"/>
        <path d="M340 645L352 677M654 587L696 677M1008 521L1078 677"/>
        <path d="M472 677L1032 573M772 677L1057 624"/>
        <path d="M667 648L688 629M1021 583L1044 562M1045 633L1068 614"/>
      </g>
      <polygon class="side" points="202,279 492,225 495,278 223,328"/>
      <polygon class="side" points="515,220 650,195 848,197 849,212 537,270"/>
      <polygon class="side" points="170,288 177,287 182,337 170,340"/>
      <polygon class="dark" points="177,287 182,337 235,452 252,448"/>
      <polygon class="dark" points="457,197 477,197 485,217 467,221"/>
      <polygon class="dark" points="489,225 495,278 537,365 553,362"/>
      <polygon class="dark" points="848,197 862,197 921,324 903,328 849,212"/>
      <polygon class="top" points="170,273 590,197 650,197 202,282 177,287 170,288"/>
      <polygon class="top" points="170,218 268,416 275,458 252,448 177,287 170,288"/>
      <polygon class="top" points="477,197 503,197 576,358 553,362"/>
      <polygon class="top" points="862,197 888,197 948,326 937,335 921,324"/>
      <polygon class="top" points="592,387 921,324 948,326 937,335 598,398"/>
      <polygon class="top" points="170,465 252,448 275,458 170,477"/>
      <polygon class="side" points="170,477 275,458 278,508 170,528"/>
      <polygon class="side" points="937,335 948,326 952,361"/>
      <polygon class="gtop" points="598,398 937,335 1003,472 646,540"/>
      <polygon class="gside" points="648,538 1003,472 1008,521 653,587"/>
      <polygon class="bleft" points="265,416 332,559 340,645 276,508 272,459"/>
      <polygon class="btop" points="265,416 578,358 646,502 332,559"/>
      <polygon class="bfront" points="332,559 646,502 653,587 340,645"/>
      <g class="red" shape-rendering="auto"><path d="M276 508L340 645L1008 521M254 661L340 645"/></g>
      <g class="axis" shape-rendering="auto">
        <path class="zx" d="M225 627L222 600"/><polygon class="zf" points="222,585 218,597 226,597"/>
        <path class="xx" d="M225 627L250 613"/><polygon class="xf" points="264,607 248,608 254,618"/>
        <path class="yx" d="M225 627L202 613"/><polygon class="yf" points="194,609 205,610 200,619"/>
        <path class="zl" d="M211 583h8l-8 8h9"/>
        <path class="xl" d="M243 602l8 8M251 602l-8 8"/>
        <path class="yl" d="M207 604l4 4 4-4M211 608v6"/>
      </g>
      <text class="dimt" transform="translate(512 656) rotate(17)" text-anchor="middle">4500</text>
      <text class="dimt" transform="translate(847 593) rotate(17)" text-anchor="middle">5100</text>
      <text class="axt" x="349" y="668" text-anchor="middle">2</text>
      <text class="axt" x="690" y="668" text-anchor="middle">3</text>
      <text class="axt" x="1075" y="668" text-anchor="middle">4</text>
    </svg>

    <div class="snap">
      <div class="bar gsnap">
        <i class="grip"></i>
        <span class="ti"><svg class="ic"><use href="#ortho"/></svg>正交</span>
        <span class="ti hot"><svg class="ic"><use href="#osnap"/></svg>对象捕捉</span>
        <span class="ti hot"><svg class="ic"><use href="#dyn"/></svg>动态输入</span>
        <i class="sep"></i>
        <span class="ti"><svg class="ic"><use href="#cross"/></svg>交点</span>
        <span class="ti hot"><svg class="ic"><use href="#perp"/></svg>垂点</span>
        <span class="ti hot"><svg class="ic"><use href="#midp"/></svg>中点</span>
        <span class="ti"><svg class="ic"><use href="#vert"/></svg>顶点</span>
        <span class="ti"><svg class="ic"><use href="#coord"/></svg>坐标</span>
      </div>
    </div>
  </main>
</div>

<div class="status">
  <span class="cell s1">X=40002 Y=5118</span>
  <span class="cell s2">层高:3.55m</span>
  <span class="cell s3">底标高:-3.58m</span>
  <span class="cell s4c">1(1)</span>
  <span class="cell s5">按鼠标左键指定第一个角点，或拾取构件图元</span>
</div>

<div class="sogou">
  <svg class="sg-logo"><use href="#sglogo"/></svg>
  <b>中</b><b class="punc">°,</b>
  <svg class="ic sgmic"><use href="#mic"/></svg>
  <svg class="ic"><use href="#kbd"/></svg>
  <svg class="ic"><use href="#user"/></svg>
  <svg class="ic"><use href="#shirt"/></svg>
  <svg class="ic"><use href="#wrench"/></svg>
</div>

<footer class="taskbar">
  <div class="start"><svg class="tstart"><use href="#win"/></svg></div>
  <div class="search"><i class="cortana"></i><span>在这里输入你要搜索的内容</span><svg class="ic smic"><use href="#mic"/></svg></div>
  <div class="tasks">
    <span class="task"><svg class="tk"><use href="#wheel"/></svg></span>
    <span class="task"><svg class="tk"><use href="#swirl"/></svg></span>
    <i class="tsep"></i>
    <span class="task"><svg class="tk"><use href="#edge"/></svg></span>
    <span class="task"><svg class="tk"><use href="#store"/></svg></span>
    <span class="task"><svg class="tk"><use href="#fold"/></svg></span>
    <span class="task run"><svg class="tk"><use href="#g"/></svg></span>
    <span class="task run act"><svg class="tk"><use href="#app"/></svg></span>
    <span class="task run lastrun"><svg class="tk"><use href="#ie"/></svg></span>
  </div>
  <div class="tray">
    <span class="cpu">34%<br>CPU使用</span>
    <i class="caret"></i>
    <svg class="ic"><use href="#batt"/></svg>
    <svg class="ic twifi"><use href="#wifi"/></svg>
    <svg class="ic"><use href="#spk"/></svg>
    <span class="ime">中</span>
    <svg class="ic"><use href="#sglogo"/></svg>
    <span class="clock">21:18<br>2017/6/4</span>
    <svg class="ic note"><use href="#note"/></svg>
  </div>
</footer>
</body>
</html>
```

FILE: styles.css
```css
* { box-sizing: border-box; }
html, body { margin: 0; padding: 0; }
body {
  width: 1366px; height: 768px; overflow: hidden; position: relative;
  background: #f0f0f0; color: #111;
  font: 12px/16px "Open Sans", "Noto Sans CJK SC", sans-serif;
}
i, em { font-style: normal; }
.defs { position: absolute; width: 0; height: 0; }
.ic { width: 16px; height: 16px; flex: none; display: block; }

.title { height: 23px; background: #fff; display: flex; align-items: center; padding-left: 2px; position: relative; }
.title-text { margin-left: 5px; font: 13px/16px "Liberation Sans", "Noto Sans CJK SC", sans-serif; white-space: nowrap; color: #222; }
.han { font-size: 12px; }
.badge {
  position: absolute; left: 1123px; top: -28px; width: 46px; height: 46px; border-radius: 50%;
  background: #2fb344; border: 2px solid #c4c4c4; box-shadow: 0 1px 2px #888;
  display: flex; align-items: flex-end; justify-content: center; padding-bottom: 2px;
}
.badge b { color: #fff; font-size: 12px; line-height: 14px; }
.win-btns { margin-left: auto; display: flex; width: 138px; height: 23px; }
.win-btns i { flex: 1; position: relative; display: block; }
.wmin::after { content: ""; position: absolute; left: 18px; top: 10px; width: 10px; height: 1px; background: #111; }
.wmax::after { content: ""; position: absolute; left: 18px; top: 7px; width: 9px; height: 9px; border: 1px solid #111; background: #fff; }
.wmax::before { content: ""; position: absolute; left: 20px; top: 5px; width: 9px; height: 9px; border: 1px solid #111; }
.wclose::before, .wclose::after { content: ""; position: absolute; left: 16px; top: 10px; width: 14px; height: 1px; background: #111; }
.wclose::before { transform: rotate(45deg); }
.wclose::after { transform: rotate(-45deg); }

.menu { height: 31px; display: flex; align-items: center; }
.menu-items { display: flex; align-items: center; gap: 11.5px; padding-left: 7px; width: 937px; white-space: nowrap; }
.m-new { margin-left: -1.500px; }
.m-xiao { margin-left: -6px; }
.tip { width: 187px; height: 26px; background: linear-gradient(#fcfcfc, #f3f3f3); color: #3a6a00; line-height: 26px; padding-left: 29px; white-space: nowrap; }
.account { flex: 1; margin-left: 2px; height: 26px; background: linear-gradient(#fcfcfc, #f3f3f3); display: flex; align-items: center; gap: 10px; padding-left: 4px; position: relative; }
.account .more { position: absolute; right: 3px; top: 0; }
.more { font-size: 13px; line-height: 12px; color: #111; margin-left: auto; align-self: flex-start; margin-top: 4px; }

.ti { display: inline-flex; align-items: center; gap: 4px; white-space: nowrap; height: 24px; }
.off { color: #9c9c9c; }
.arr { display: inline-block; flex: none; width: 7px; height: 4px; background: #111; clip-path: polygon(0 0, 100% 0, 50% 100%); }
.ti .arr { margin-left: 1px; }
.ti .arr.tight { margin-left: -2px; }
.arr.gray { background: #888; }
.sep { flex: none; display: block; width: 1px; height: 19px; background: #b8b8b8; margin-right: -2px; }
.sep.s4 { margin-right: -4px; }
.grip { flex: none; display: block; width: 2px; height: 15px; margin: 0 -3px 0 3px; background: repeating-linear-gradient(#8a8a8a 0 2px, transparent 2px 4px); }
.bar { display: flex; align-items: center; gap: 7px; background: linear-gradient(#fdfdfd, #ececec); border-radius: 2px; white-space: nowrap; }

.row1 { height: 30px; display: flex; gap: 2px; padding: 0 0 4px 2px; }
.row1 .bar { padding-top: 2px; }
.row1 .more { margin-top: 2px; }
.g1 { width: 149px; padding-left: 3px; gap: 8px; }
.g1 .arr { margin: 0 -2px 0 -3px; }
.g1 .sep { margin: 0 -1px 0 0; }
.g2 { width: 548px; padding-left: 4px; padding-right: 3px; }
.g3 { width: 662px; padding-left: 4px; padding-right: 4px; }
.whitebox { background: #fff; box-shadow: -2px 0 #fff, 3px 0 #fff; }
.sigma { width: 16px; text-align: center; font-size: 14px; }

.work { height: 624px; display: flex; }
.panel { width: 170px; padding-right: 4px; flex: none; display: flex; flex-direction: column; }
.panel-head { height: 16px; background: #0a5fe0; color: #fff; font-size: 13px; line-height: 16px; display: flex; align-items: center; gap: 6px; flex: none; }
.panel-head span { width: 127px; white-space: nowrap; }
.sm { width: 12px; height: 12px; flex: none; }
.pbtn { height: 22px; margin-top: 1px; background: #f2f2f2; border: 1px solid #a0a0a0; text-align: center; line-height: 20px; font-size: 12px; flex: none; }
.pbtn.first { margin-top: 0; line-height: 22px; }
.pbody { height: 514px; margin-top: 1px; padding: 0 2px; display: flex; flex-direction: column; flex: none; }
.ptools { height: 26px; display: flex; gap: 5px; padding: 6px 0 0 4px; background: linear-gradient(#fafafa, #f0f0f0); flex: none; }
.pm { width: 18px; height: 14px; flex: none; }
.tree { height: 487px; background: #fff; border: 1px solid #9a9a9a; display: flex; overflow: hidden; flex: none; }
.tlist { list-style: none; margin: 0; padding: 2px 0 0 0; width: 143px; flex: none; overflow: hidden; }
.tlist li { height: 16px; display: flex; align-items: center; white-space: nowrap; position: relative; color: #111; }
.tlist li.fo { padding-left: 23px; gap: 4px; }
.tlist li.leaf { padding-left: 43px; gap: 5px; }
.tlist li.leaf .ic { width: 15px; height: 15px; }
.tlist li.leaf::before { content: ""; position: absolute; left: 31px; top: 0; height: 100%; border-left: 1px dotted #777; }
.tlist li.leaf.end::before { height: 50%; }
.tlist li.leaf::after { content: ""; position: absolute; left: 32px; top: 8px; width: 10px; border-top: 1px dotted #777; }
.tlist li.fo::after { content: ""; position: absolute; left: 19px; top: 8px; width: 4px; border-top: 1px dotted #777; }
.tlist em { font: 10px/16px "Liberation Mono", monospace; margin-left: -5px; }
.tlist li.hl { background: linear-gradient(#d9d9d9, #d9d9d9) 40px 0 / 93px 100% no-repeat; }
.tail { margin-left: -3px; }
.chev { position: absolute; left: 9px; top: 4px; width: 6px; height: 6px; border: solid #999; border-width: 2px 2px 0 0; transform: rotate(45deg); }
.chev.open { border-color: #444; transform: rotate(135deg); top: 3px; }
.scroll { width: 15px; flex: none; margin-left: 1px; display: flex; flex-direction: column; background: #f0f0f0; }
.sup, .sdown { height: 17px; flex: none; position: relative; display: block; }
.sup::after, .sdown::after { content: ""; position: absolute; left: 4px; top: 7px; width: 6px; height: 6px; border: solid #444; border-width: 2px 0 0 2px; transform: rotate(45deg); }
.sdown::after { transform: rotate(225deg); top: 3px; }
.thumb { display: block; height: 410px; background: #cdcdcd; flex: none; }
.strack { display: block; flex: 1; }
.pbtn.low { margin-top: 1px; height: 21px; line-height: 21px; }

.right { flex: 1; min-width: 0; display: flex; flex-direction: column; }
.r2 { height: 28px; display: flex; padding-left: 630px; }
.gop { height: 24px; margin-top: 1px; width: 407px; gap: 3px; padding-left: 0; font-size: 12px; }
.gop .grip { margin: 0 -1px 0 0; }
.gop .sep { margin-right: 0; }
.combo { display: flex; align-items: center; height: 23px; background: #fff; padding-left: 2px; position: relative; flex: none; }
.carr { position: absolute; right: 0; top: 0; width: 11px; height: 100%; background: #f2f2f2; display: flex; align-items: center; justify-content: center; }
.carr .arr { margin: 0; }
.c-off { width: 58px; margin-left: 0; }
.w56 { width: 56px; }
.blankcombo { margin-left: -4px; }
.w67 { width: 67px; }
.w70 { width: 69px; }
.lbl { color: #777; font-size: 12px; }
.y { margin-left: 2px; }
.num { position: relative; height: 23px; border: 1px solid #777; background: #fbfbfb; color: #777; display: block; text-align: right; padding-right: 17px; line-height: 21px; font-size: 13px; flex: none; }
.nx { margin-left: 3px; }
.w58 { width: 58px; }
.w68 { width: 68px; }
.spin { position: absolute; right: 3px; top: 3px; width: 9px; height: 15px; }
.spin::before, .spin::after { content: ""; position: absolute; left: 1px; width: 7px; height: 4px; background: #555; }
.spin::before { top: 1px; clip-path: polygon(50% 0, 100% 100%, 0 100%); }
.spin::after { bottom: 1px; clip-path: polygon(0 0, 100% 0, 50% 100%); }
.check { display: block; width: 11px; height: 11px; border: 1px solid #999; background: #fff; flex: none; margin-left: -1px; }
.rotl { margin: 0 2px 0 6px; color: #111; }

.r3 { height: 28px; padding: 1px 0 2px 2px; display: flex; }
.gedit { width: 788px; }
.r4 { height: 28px; padding: 1px 0 2px 2px; display: flex; }
.gcomp { width: 565px; gap: 5px; }
.gcomp .grip { margin-right: -3px; margin-left: 3px; }
.gcomp .ti { margin-left: 2px; }
.gcomp .sep { margin: 0 -3px 0 0; }
.gblank { width: 31px; margin-left: 2px; }
.blank { display: block; width: 24px; height: 25px; background: linear-gradient(#fff, #f2f2f2); }
.gaux { width: 420px; margin-left: 75px; }
.r5 { height: 29px; padding: 1px 0 3px 2px; display: flex; }
.gdraw { width: 1166px; gap: 7px; padding-top: 2px; }
.hot { background: #e3f0fb; border: 1px solid #1d84d8; height: 23px; padding: 0 2px; gap: 3px; }
.sel-btn { padding: 0 4px 0 1px; gap: 4px; margin-left: -3px; }
.gdraw .sel-btn + .arr { margin-left: -5px; }

.canvas { width: 1196px; height: 480px; flex: none; display: block; }
.top { fill: #4ce64c; }
.side { fill: #3cb03c; }
.dark { fill: #2e8b2e; }
.gtop { fill: #aaa; }
.gside { fill: #858585; }
.btop { fill: #0073e6; }
.bfront { fill: #0058b0; }
.bleft { fill: #004a90; }
.olive { fill: #6e6e00; }
.gl { fill: none; stroke: #0c7a0c; stroke-width: 1; }
.red { fill: none; stroke: #f00; stroke-width: 1; }
.axis path { fill: none; }
.zx { stroke: #0a80f0; stroke-width: 3; }
.zf { fill: #0a80f0; }
.xx { stroke: #f01010; stroke-width: 3; }
.xf { fill: #f01010; }
.yx { stroke: #10e010; stroke-width: 3; }
.yf { fill: #10e010; }
.zl { stroke: #0a80f0; }
.xl { stroke: #e02020; }
.yl { stroke: #10a010; }
.dimt { fill: #ccc; font: 15px "Liberation Sans", sans-serif; }
.axt { fill: #ccc; font: 14px "Liberation Sans", sans-serif; }

.snap { height: 30px; padding: 3px 0 4px 2px; display: flex; }
.gsnap { width: 473px; gap: 6px; }
.gsnap .hot { gap: 4px; }
.gsnap .hot + .hot { margin-left: -6px; }
.gsnap .sep { height: 0; width: 0; background: none; margin: 0 1px; }

.status { height: 20px; margin-top: 1px; display: flex; gap: 2px; font: 12px/19px "Noto Sans CJK SC", sans-serif; }
.cell { background: linear-gradient(#fdfdfd, #f0f0f0); border-top: 1px solid #d4d4d4; padding-left: 2px; white-space: nowrap; height: 20px; }
.s1 { width: 148px; font: 10px/19px "Liberation Mono", monospace; }
.s2 { width: 77px; }
.s3 { width: 98px; }
.s4c { width: 47px; }
.s5 { flex: 1; }

.sogou {
  position: absolute; left: 1195px; top: 700px; width: 171px; height: 23px;
  background: #fff; border: 1px solid #bcd0e4; display: flex; align-items: center; gap: 6px; padding-left: 16px; color: #1f7fd0;
}
.sogou b { font-size: 15px; }
.sogou .punc { margin: 0 4px 0 2px; }
.sogou .ic:nth-of-type(4) { margin-left: 3px; }
.sg-logo { position: absolute; left: -14px; top: -4px; width: 28px; height: 28px; }

.taskbar { height: 40px; background: #04141a; color: #e8e8e8; display: flex; align-items: stretch; }
.start { width: 48px; display: flex; align-items: center; justify-content: center; }
.tstart { width: 16px; height: 16px; }
.search { width: 344px; background: #333; display: flex; align-items: center; padding-left: 11px; color: #a0a0a0; font-size: 14px; }
.cortana { width: 17px; height: 17px; border: 2px solid #e4e4e4; border-radius: 50%; flex: none; margin-right: 8px; }
.smic { margin-left: 111px; color: #9a9a9a; }
.tasks { display: flex; align-items: stretch; padding-left: 3px; }
.task { width: 48px; display: flex; align-items: center; justify-content: center; position: relative; }
.tk { width: 24px; height: 24px; flex: none; }
.tsep { display: block; width: 1px; height: 20px; background: #3a4448; margin: 10px 15px 0 11px; align-self: flex-start; flex: none; }
.run::after { content: ""; position: absolute; left: 2px; right: 2px; bottom: 0; height: 2px; background: #5aa8e8; }
.act { background: #2c3c42; margin-left: 2px; }
.act::after { left: 0; right: 0; }
.lastrun { margin-left: 1px; }
.tray { flex: 1; display: flex; align-items: center; gap: 9px; padding-left: 217px; white-space: nowrap; }
.cpu { text-align: center; font-size: 12px; line-height: 19px; width: 50px; margin-right: 13px; margin-left: -7px; flex: none; }
.caret { width: 8px; height: 8px; border: solid #eee; border-width: 1px 0 0 1px; transform: rotate(45deg); display: block; margin: 4px 2px 0 0; flex: none; }
.twifi { margin-right: -3px; }
.ime { font-size: 14px; margin: 0 5px 0 0; }
.clock { text-align: center; line-height: 19px; width: 60px; margin-left: 8px; flex: none; }
.note { margin-left: 9px; }
```
